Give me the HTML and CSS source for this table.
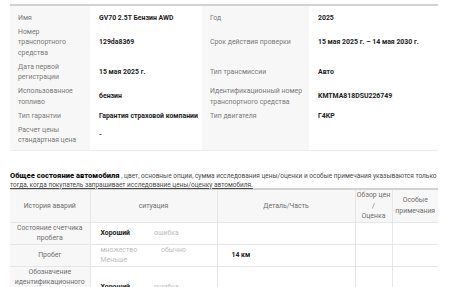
FILE: index.html
```html
<!DOCTYPE html>
<html lang="ru">
<head>
<meta charset="utf-8">
<link rel="stylesheet" href="styles.css">
</head>
<body>
<div class="page">
  <div class="spec">
    <div class="lbl first">Имя</div>
    <div class="val first">GV70 2.5T Бензин AWD</div>
    <div class="lbl first">Год</div>
    <div class="val first">2025</div>

    <div class="lbl">Номер транспортного средства</div>
    <div class="val">129da8369</div>
    <div class="lbl">Срок действия проверки</div>
    <div class="val">15 мая 2025 г. – 14 мая 2030 г.</div>

    <div class="lbl">Дата первой регистрации</div>
    <div class="val">15 мая 2025 г.</div>
    <div class="lbl">Тип трансмиссии</div>
    <div class="val">Авто</div>

    <div class="lbl">Использованное топливо</div>
    <div class="val">бензин</div>
    <div class="lbl">Идентификационный номер транспортного средства</div>
    <div class="val"><span class="vin">KMTMA818DSU226749</span></div>

    <div class="lbl">Тип гарантии</div>
    <div class="val">Гарантия страховой компании</div>
    <div class="lbl">Тип двигателя</div>
    <div class="val">Г4КР</div>

    <div class="lbl last">Расчет цены стандартная цена</div>
    <div class="val last">-</div>
    <div class="lbl last"></div>
    <div class="val last"></div>
  </div>

  <p class="note"><strong class="note-title">Общее состояние автомобиля</strong> <span class="note-text">, цвет, основные опции, сумма исследования цены/оценки и особые примечания указываются только <u>тогда, когда покупатель запрашивает исследование цены/оценку автомобиля.</u></span></p>

  <table class="cond">
    <colgroup>
      <col class="c1"><col class="c2"><col class="c3"><col class="c4"><col class="c5">
    </colgroup>
    <thead>
      <tr>
        <th>История аварий</th>
        <th>ситуация</th>
        <th>Деталь/Часть</th>
        <th>Обзор цен<br>/<br>Оценка</th>
        <th>Особые примечания</th>
      </tr>
    </thead>
    <tbody>
      <tr>
        <th class="rowhead">Состояние счетчика пробега</th>
        <td><div class="opts"><span class="opt on">Хороший</span><span class="opt">ошибка</span></div></td>
        <td></td><td></td><td></td>
      </tr>
      <tr>
        <th class="rowhead">Пробег</th>
        <td><div class="opts"><span class="opt">множество</span><span class="opt">обычно</span><span class="opt">Меньше</span></div></td>
        <td class="detail">14 км</td><td></td><td></td>
      </tr>
      <tr>
        <th class="rowhead">Обозначение идентификационного номера транспортного средства</th>
        <td><div class="opts"><span class="opt on">Хороший</span><span class="opt">ошибка</span></div></td>
        <td></td><td></td><td></td>
      </tr>
    </tbody>
  </table>
</div>
</body>
</html>
```

FILE: styles.css
```css
* { box-sizing: border-box; }
html, body { margin: 0; padding: 0; background: #fff; }
body {
  font-family: Roboto, "Noto Sans", "DejaVu Sans", sans-serif;
  font-size: 6.9px;
  line-height: 10.5px;
  color: #222;
}
.page {
  width: 456px;
  padding: 4px 18px 0 10px;
}
.spec {
  display: grid;
  grid-template-columns: 80px 112px 107px 129px;
  border-top: 2px solid #d2d2d2;
  border-bottom: 1px solid #ececec;
}
.lbl, .val {
  display: flex;
  align-items: center;
  padding: 1.75px 2px 1.75px 8px;
}
.lbl {
  background: #f7f7f7;
  color: #7a7a7a;
}
.val {
  font-weight: 700;
  color: #222;
  padding-left: 9px;
}
.first { padding-top: 6.5px; }
.last { padding-bottom: 4.5px; }
.vin { background: #f9f9f9; padding: 0 2px; margin-left: -2px; }

.note {
  margin: 21px 0 0;
  line-height: 8.6px;
  font-size: 6.5px;
  color: #4a4a4a;
}
.note-title {
  font-size: 7.6px;
  font-weight: 900;
  color: #111;
}
.note u { text-decoration-thickness: 0.5px; text-underline-offset: 1px; }

.cond {
  width: 428px;
  border-collapse: collapse;
  table-layout: fixed;
  margin-top: -1px;
  border-top: 2px solid #d2d2d2;
}
.c1 { width: 80px; }
.c2 { width: 127px; }
.c3 { width: 138px; }
.c4 { width: 37px; }
.c5 { width: 46px; }
.cond th, .cond td {
  border: 1px solid #e6e6e6;
  padding: 0 1px;
  vertical-align: middle;
}
.cond tr > :first-child { border-left: 0; }
.cond tr > :last-child { border-right: 0; }
.cond thead th {
  background: #f7f7f7;
  color: #6f6f6f;
  font-weight: 400;
  text-align: center;
  height: 32px;
  line-height: 10.6px;
  border-top: 0;
}
.cond .rowhead {
  background: #f7f7f7;
  color: #6f6f6f;
  font-weight: 400;
  text-align: center;
  height: 22px;
  line-height: 10.2px;
}
.cond td { padding-left: 10px; }
.opts {
  display: flex;
  flex-wrap: wrap;
  column-gap: 24px;
  line-height: 10px;
}
.opt { color: #bdbdbd; }
.opt.on { color: #222; font-weight: 700; }
.detail { font-weight: 700; color: #222; padding-left: 14px !important; }
```
